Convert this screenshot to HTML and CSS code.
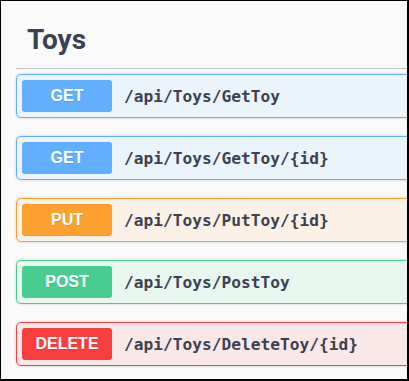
FILE: index.html
```html
<!DOCTYPE html>
<html lang="en">
    <head>
        <meta charset="utf-8" />
        <link rel="stylesheet" href="styles.css">
    </head>
    <body>
        <div id="frame">
            <div class="tag-section">
                <h3 class="opblock-tag">Toys</h3>
                <div class="opblocks">
                    <div class="opblock get">
                        <span class="method">GET</span>
                        <span class="path">/api/Toys/GetToy</span>
                    </div>
                    <div class="opblock get">
                        <span class="method">GET</span>
                        <span class="path">/api/Toys/GetToy/{id}</span>
                    </div>
                    <div class="opblock put">
                        <span class="method">PUT</span>
                        <span class="path">/api/Toys/PutToy/{id}</span>
                    </div>
                    <div class="opblock post">
                        <span class="method">POST</span>
                        <span class="path">/api/Toys/PostToy</span>
                    </div>
                    <div class="opblock delete">
                        <span class="method">DELETE</span>
                        <span class="path">/api/Toys/DeleteToy/{id}</span>
                    </div>
                </div>
            </div>
        </div>
    </body>
</html>
```
FILE: styles.css
```css
/* page */
body {
    margin:             0;
    background-color:   #FAFAFA;
    font-family:        "Liberation Sans", Arial, sans-serif;
}
#frame {
    width:              409px;
    height:             381px;
    box-sizing:         border-box;
    border-style:       solid;
    border-color:       #000000;
    border-width:       1px 2px 2px 1px;
    overflow:           hidden;
    background-color:   #FAFAFA;
}
.tag-section {
    padding-left:       15px;
}

/* tag heading */
.opblock-tag {
    margin:             0;
    padding:            21px 0 11px 11px;
    font-family:        Roboto, "Liberation Sans", sans-serif;
    font-size:          28px;
    font-weight:        700;
    line-height:        35px;
    color:              #3B4151;
    border-bottom:      1px solid #C4C5C8;
    width:              420px;
}

/* operations */
.opblocks {
    padding-top:        5px;
}
.opblock {
    display:            flex;
    align-items:        center;
    width:              430px;
    height:             44px;
    box-sizing:         border-box;
    padding:            0 5px;
    margin-bottom:      18px;
    border:             1px solid;
    border-radius:      5px;
    box-shadow:         0 0 3px rgba(0, 0, 0, .19);
}
.method {
    display:            inline-block;
    width:              90px;
    height:             32px;
    line-height:        32px;
    border-radius:      3px;
    text-align:         center;
    color:              #FFFFFF;
    font-size:          16px;
    font-weight:        700;
    text-shadow:        0 1px 0 rgba(0, 0, 0, .1);
}
.path {
    padding-left:       12px;
    font-family:        "DejaVu Sans Mono", monospace;
    font-size:          16.2px;
    font-weight:        700;
    color:              #3B4151;
}

.get            { border-color: #61AFFE; background-color: #EBF3FB; }
.get .method    { background-color: #61AFFE; }
.put            { border-color: #FCA130; background-color: #FBF1E6; }
.put .method    { background-color: #FCA130; }
.post           { border-color: #49CC90; background-color: #E8F6F0; }
.post .method   { background-color: #49CC90; }
.delete         { border-color: #F93E3E; background-color: #FAE7E7; }
.delete .method { background-color: #F93E3E; }
```
